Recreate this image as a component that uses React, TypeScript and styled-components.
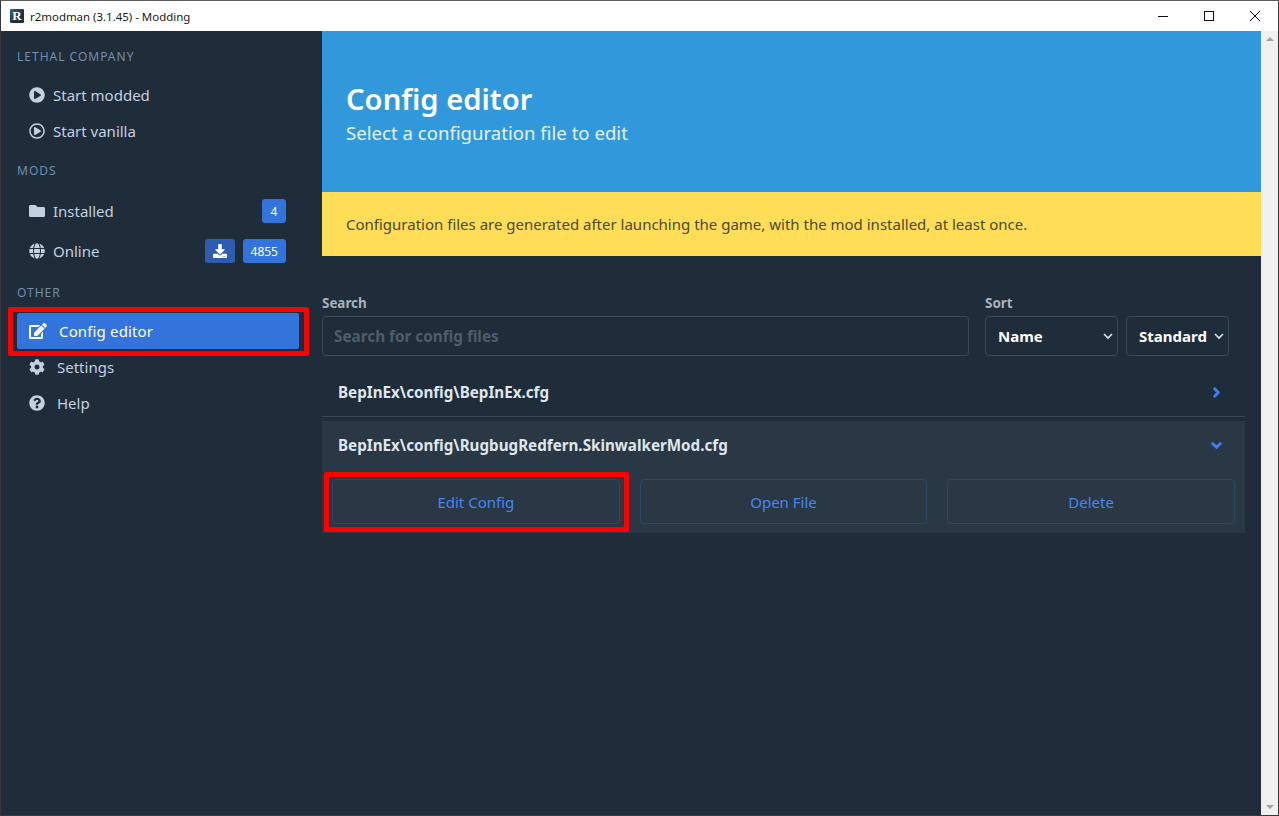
import styled, { createGlobalStyle } from 'styled-components';
import { ReactNode } from 'react';
import {
  FaChevronDown,
  FaChevronRight,
  FaCog,
  FaDownload,
  FaEdit,
  FaFolder,
  FaGlobe,
  FaPlayCircle,
  FaQuestionCircle,
  FaRegPlayCircle,
} from 'react-icons/fa';

const GlobalStyle = createGlobalStyle`
  html, body {
    margin: 0;
    padding: 0;
    height: 100%;
    overflow: hidden;
    background: #1f2c3a;
  }
  * {
    box-sizing: border-box;
  }
  body {
    font-family: "Noto Sans", "Open Sans", sans-serif;
  }
`;

const Frame = styled.div`
  width: 1279px;
  height: 816px;
  display: flex;
  flex-direction: column;
  border: 1px solid #35393d;
  border-top-color: #5c5c5c;
`;

const TitleBar = styled.header`
  height: 30px;
  flex: none;
  display: flex;
  align-items: center;
  background: #fff;
  padding-left: 9px;
`;

const AppLogo = styled.span`
  width: 14px;
  height: 14px;
  display: flex;
  align-items: center;
  justify-content: center;
  margin-right: 6px;
  border-radius: 1px;
  background: linear-gradient(135deg, #1c6a90, #25303a 60%);
  color: #fff;
  font-family: "Liberation Serif", serif;
  font-size: 13px;
  font-weight: 700;
`;

const TitleText = styled.span`
  font-size: 11.45px;
  color: #1a1a1a;
`;

const WindowControls = styled.div`
  margin-left: auto;
  display: flex;
`;

const WindowButton = styled.span`
  width: 46px;
  height: 30px;
  display: flex;
  align-items: center;
  justify-content: center;
  svg {
    display: block;
  }
`;

const Body = styled.div`
  flex: 1;
  display: flex;
  min-height: 0;
`;

const Sidebar = styled.aside`
  width: 321px;
  flex: none;
  padding: 0 23px 0 16px;
  background: #1f2c3a;
`;

const MenuLabel = styled.p<{ $first?: boolean }>`
  margin: ${(p) => (p.$first ? '18px' : '14px')} 0 0;
  height: 16px;
  line-height: 16px;
  font-size: 12px;
  letter-spacing: 1px;
  text-transform: uppercase;
  color: #6f8fae;
`;

const MenuList = styled.ul`
  list-style: none;
  margin: 12px 0 0;
  padding: 0;
`;

const MenuRow = styled.li<{ $active?: boolean; $tall?: boolean; $highlighted?: boolean; $gap?: number }>`
  position: relative;
  height: ${(p) => (p.$tall ? '40px' : '36px')};
  display: flex;
  align-items: center;
  gap: ${(p) => p.$gap ?? 8}px;
  padding: 0 13px 0 12px;
  border-radius: 2px;
  font-size: 15px;
  background: ${(p) => (p.$active ? '#3273dc' : 'transparent')};
  color: ${(p) => (p.$active ? '#fff' : '#c3d0e0')};
  svg {
    flex: none;
  }
  ${(p) =>
    p.$highlighted &&
    `
    letter-spacing: 0.15px;
    &::after {
      content: "";
      position: absolute;
      inset: -6px -10px -7px -9px;
      border: 5px solid #fe0000;
      border-radius: 2px;
      pointer-events: none;
    }
  `}
`;

const MenuIconSlot = styled.span`
  width: 16px;
  display: flex;
  justify-content: center;
`;

const MenuTags = styled.span`
  margin-left: auto;
  display: flex;
  gap: 8px;
`;

const Tag = styled.span<{ $dim?: boolean }>`
  height: 24px;
  min-width: 24px;
  padding: 0 8px;
  display: flex;
  align-items: center;
  justify-content: center;
  border-radius: 3px;
  font-size: 12px;
  color: #fff;
  background: ${(p) => (p.$dim ? '#2d5cb0' : '#3273dc')};
`;

const Main = styled.main`
  flex: 1;
  min-width: 0;
  display: flex;
  flex-direction: column;
  background: #1f2c3a;
`;

const Hero = styled.section`
  height: 161px;
  flex: none;
  display: flex;
  flex-direction: column;
  justify-content: center;
  padding: 5px 24px 0;
  background: #3298dc;
  color: #fff;
`;

const HeroTitle = styled.h1`
  margin: 0;
  font-size: 29.2px;
  line-height: 36px;
  font-weight: 600;
`;

const HeroSubtitle = styled.p`
  margin: 1px 0 0;
  font-size: 18.6px;
  line-height: 30px;
  color: #e6f3fb;
`;

const Notice = styled.div`
  height: 64px;
  flex: none;
  display: flex;
  align-items: center;
  padding: 0 24px;
  font-size: 15px;
  color: #4d4a2a;
  background: #ffdd57;
`;

const FilterBar = styled.div`
  display: flex;
  gap: 16px;
  margin: 38px 32px 0 0;
`;

const Field = styled.div<{ $grow?: boolean }>`
  display: flex;
  flex-direction: column;
  gap: 4px;
  flex: ${(p) => (p.$grow ? '1' : 'none')};
`;

const FieldLabel = styled.label`
  height: 18px;
  line-height: 18px;
  font-size: 13.4px;
  font-weight: 700;
  color: #a9b3bd;
`;

const SearchInput = styled.input`
  height: 40px;
  width: 100%;
  padding: 0 11px;
  border: 1px solid #3a4653;
  border-radius: 4px;
  background: transparent;
  color: #fff;
  font: 700 15.3px "Noto Sans", sans-serif;
  outline: none;
  &::placeholder {
    color: #4f5c6a;
    opacity: 1;
  }
`;

const SelectGroup = styled.div`
  display: flex;
  gap: 8px;
`;

const SelectBox = styled.div<{ $width: number; $pad: number }>`
  width: ${(p) => p.$width}px;
  height: 40px;
  display: flex;
  align-items: center;
  justify-content: space-between;
  padding: 0 1px 0 ${(p) => p.$pad}px;
  border: 1px solid #3a4653;
  border-radius: 4px;
  font-size: 15px;
  font-weight: 700;
  color: #fff;
`;

const ConfigList = styled.div`
  margin: 14px 16px 0 0;
`;

const ConfigRow = styled.div`
  height: 47px;
  display: flex;
  align-items: center;
  justify-content: space-between;
  padding: 0 23px 2px 16px;
  border-bottom: 1px solid #3a4653;
  font-size: 15.2px;
  font-weight: 700;
  color: #dfe6ee;
  svg {
    color: #3f82f5;
    stroke: currentColor;
    stroke-width: 50px;
  }
`;

const ExpandedRow = styled.div`
  margin-top: 4px;
  height: 112px;
  background: #2a3745;
`;

const ExpandedHeader = styled(ConfigRow)`
  height: 50px;
  border-bottom: none;
`;

const ActionRow = styled.div`
  display: grid;
  grid-template-columns: repeat(3, 1fr);
  gap: 20px;
  margin-top: 8px;
  padding: 0 10px;
`;

const ActionButton = styled.button<{ $highlighted?: boolean }>`
  position: relative;
  height: 45px;
  border: 1px solid #2f4566;
  border-radius: 4px;
  background: transparent;
  color: #4686f2;
  font: 400 15px "Noto Sans", sans-serif;
  ${(p) =>
    p.$highlighted &&
    `
    &::after {
      content: "";
      position: absolute;
      inset: -8px -10px -9px -9px;
      border: 5px solid #fe0000;
      border-radius: 2px;
      pointer-events: none;
    }
  `}
`;

const Scrollbar = styled.div`
  width: 17px;
  flex: none;
  display: flex;
  flex-direction: column;
  justify-content: space-between;
  align-items: center;
  padding: 6px 0;
  background: #f0f0f0;
`;

const ScrollArrow = styled.span<{ $down?: boolean }>`
  width: 0;
  height: 0;
  border-left: 4px solid transparent;
  border-right: 4px solid transparent;
  ${(p) => (p.$down ? 'border-top: 4px solid #a3a3a3;' : 'border-bottom: 4px solid #a3a3a3;')}
`;

function SelectChevron() {
  return (
    <svg width="16" height="16" viewBox="0 0 16 16" fill="none">
      <path d="M4 6L8 10L12 6" stroke="#dfe6ee" strokeWidth="1.6" />
    </svg>
  );
}

function NavItem(props: { icon: ReactNode; label: string; tall?: boolean; gap?: number; tags?: ReactNode }) {
  return (
    <MenuRow $tall={props.tall} $gap={props.gap}>
      <MenuIconSlot>{props.icon}</MenuIconSlot>
      {props.label}
      {props.tags && <MenuTags>{props.tags}</MenuTags>}
    </MenuRow>
  );
}

export default function App() {
  return (
    <>
      <GlobalStyle />
      <Frame>
        <TitleBar>
          <AppLogo>R</AppLogo>
          <TitleText>r2modman (3.1.45) - Modding</TitleText>
          <WindowControls>
            <WindowButton>
              <svg width="10" height="10" viewBox="0 0 10 10">
                <path d="M0 5.5H10" stroke="#111" fill="none" />
              </svg>
            </WindowButton>
            <WindowButton>
              <svg width="10" height="10" viewBox="0 0 10 10">
                <rect x="0.5" y="0.5" width="9" height="9" stroke="#111" fill="none" />
              </svg>
            </WindowButton>
            <WindowButton>
              <svg width="10" height="10" viewBox="0 0 10 10">
                <path d="M0 0L10 10M10 0L0 10" stroke="#111" fill="none" />
              </svg>
            </WindowButton>
          </WindowControls>
        </TitleBar>
        <Body>
          <Sidebar>
            <MenuLabel $first>Lethal Company</MenuLabel>
            <MenuList>
              <NavItem icon={<FaPlayCircle size={16} />} label="Start modded" />
              <NavItem icon={<FaRegPlayCircle size={16} />} label="Start vanilla" />
            </MenuList>
            <MenuLabel>Mods</MenuLabel>
            <MenuList>
              <NavItem icon={<FaFolder size={16} />} label="Installed" tall tags={<Tag>4</Tag>} />
              <NavItem
                icon={<FaGlobe size={16} />}
                label="Online"
                tall
                tags={
                  <>
                    <Tag $dim>
                      <FaDownload size={14} />
                    </Tag>
                    <Tag>4855</Tag>
                  </>
                }
              />
            </MenuList>
            <MenuLabel>Other</MenuLabel>
            <MenuList>
              <MenuRow $active $highlighted $gap={12}>
                <FaEdit size={18} />
                Config editor
              </MenuRow>
              <NavItem icon={<FaCog size={16} />} label="Settings" gap={12} />
              <NavItem icon={<FaQuestionCircle size={16} />} label="Help" gap={12} />
            </MenuList>
          </Sidebar>
          <Main>
            <Hero>
              <HeroTitle>Config editor</HeroTitle>
              <HeroSubtitle>Select a configuration file to edit</HeroSubtitle>
            </Hero>
            <Notice>
              Configuration files are generated after launching the game, with the mod installed, at least once.
            </Notice>
            <FilterBar>
              <Field $grow>
                <FieldLabel>Search</FieldLabel>
                <SearchInput placeholder="Search for config files" />
              </Field>
              <Field>
                <FieldLabel>Sort</FieldLabel>
                <SelectGroup>
                  <SelectBox $width={133} $pad={12}>
                    Name
                    <SelectChevron />
                  </SelectBox>
                  <SelectBox $width={103} $pad={12}>
                    Standard
                    <SelectChevron />
                  </SelectBox>
                </SelectGroup>
              </Field>
            </FilterBar>
            <ConfigList>
              <ConfigRow>
                BepInEx\config\BepInEx.cfg
                <FaChevronRight size={11} />
              </ConfigRow>
              <ExpandedRow>
                <ExpandedHeader>
                  BepInEx\config\RugbugRedfern.SkinwalkerMod.cfg
                  <FaChevronDown size={11} />
                </ExpandedHeader>
                <ActionRow>
                  <ActionButton $highlighted>Edit Config</ActionButton>
                  <ActionButton>Open File</ActionButton>
                  <ActionButton>Delete</ActionButton>
                </ActionRow>
              </ExpandedRow>
            </ConfigList>
          </Main>
          <Scrollbar>
            <ScrollArrow />
            <ScrollArrow $down />
          </Scrollbar>
        </Body>
      </Frame>
    </>
  );
}
